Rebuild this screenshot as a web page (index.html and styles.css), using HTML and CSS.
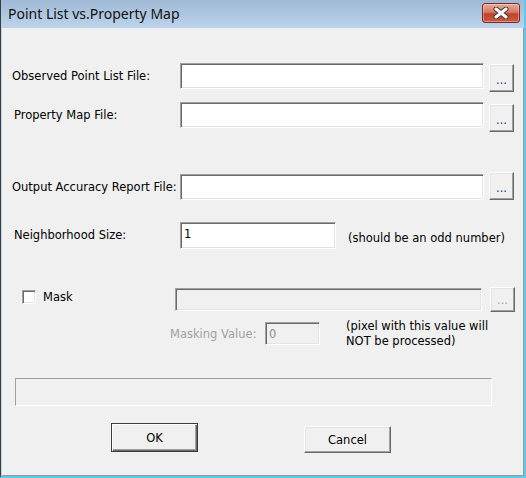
FILE: index.html
```html
<!DOCTYPE html>
<html lang="en">
<head>
  <meta charset="UTF-8">
  <title>Point List vs.Property Map</title>
  <link rel="stylesheet" href="styles.css">
</head>
<body>
  <div class="window">
    <div class="titlebar">
      <span class="title">Point List vs.Property Map</span>
      <button class="close-btn" title="Close">
        <svg width="16" height="12" viewBox="0 0 16 12">
          <path d="M3 2 L13 10 M13 2 L3 10" stroke="#3a3a3a" stroke-width="5" stroke-linecap="round"/>
          <path d="M3 2 L13 10 M13 2 L3 10" stroke="#ffffff" stroke-width="3" stroke-linecap="round"/>
        </svg>
      </button>
    </div>

    <div class="client">
      <div class="row row-observed">
        <label class="label">Observed Point List File:</label>
        <input type="text" class="field field-file">
        <button class="browse">...</button>
      </div>

      <div class="row row-property">
        <label class="label label-indent">Property Map File:</label>
        <input type="text" class="field field-file">
        <button class="browse browse-low">...</button>
      </div>

      <div class="row row-output">
        <label class="label">Output Accuracy Report File:</label>
        <input type="text" class="field field-file">
        <button class="browse browse-high">...</button>
      </div>

      <div class="row row-size">
        <label class="label label-indent">Neighborhood Size:</label>
        <input type="text" class="field field-size" value="1">
        <span class="hint">(should be an odd number)</span>
      </div>

      <div class="row row-mask">
        <label class="check">
          <span class="check-box"></span>
          <span class="check-text">Mask</span>
        </label>
        <input type="text" class="field field-mask" disabled>
        <button class="browse browse-disabled" disabled>...</button>
      </div>

      <div class="row row-value">
        <span class="label-disabled">Masking Value:</span>
        <input type="text" class="field field-value" value="0" disabled>
        <span class="hint hint-two">(pixel with this value will<br>NOT be processed)</span>
      </div>

      <div class="groove"></div>

      <div class="actions">
        <button class="push push-default">OK</button>
        <button class="push push-cancel">Cancel</button>
      </div>
    </div>
  </div>
</body>
</html>
```

FILE: styles.css
```css
body {
  margin: 0;
  padding: 0;
  background: #ffffff;
  font-family: "DejaVu Sans", "Liberation Sans", sans-serif;
  font-size: 11.5px;
  color: #000;
}

.window {
  width: 526px;
  height: 478px;
  box-sizing: border-box;
  border-left: 1px solid #3c3c3c;
  border-right: 2px solid #5ec8f0;
  border-bottom: 2px solid #5ec8f0;
  background: linear-gradient(to bottom, #9fb9d6 0px, #bcd3ea 28px, #bcd3ea 100%);
  display: flex;
  flex-direction: column;
}

/* caption */
.titlebar {
  height: 28px;
  display: flex;
  align-items: center;
  justify-content: space-between;
  padding: 0 4px 0 7px;
}

.title {
  font-family: "Noto Sans", "Open Sans", sans-serif;
  font-size: 14px;
  color: #101010;
  padding-bottom: 2px;
}

.close-btn {
  width: 38px;
  height: 20px;
  margin-bottom: 3px;
  border: 1px solid #7b2b22;
  border-radius: 3px;
  background: linear-gradient(to bottom, #e9a89a 0%, #d77a66 45%, #c0432e 55%, #cd5a3f 100%);
  box-shadow: inset 0 0 0 1px rgba(255,255,255,0.35);
  display: flex;
  align-items: center;
  justify-content: center;
  padding: 0;
}

/* dialog body */
.client {
  flex: 1;
  margin: 0 0 0 1px;
  background: #f0f0f0;
  border-right: 1px solid #9a9a9a;
  border-bottom: 1px solid #9a9a9a;
  padding-left: 10px;
}

.row {
  display: flex;
  align-items: flex-start;
  height: 26px;
}

.row-observed { margin-top: 35px; }
.row-property { margin-top: 13px; }
.row-output   { margin-top: 46px; }
.row-size     { margin-top: 22px; height: 27px; }
.row-mask     { margin-top: 39px; height: 24px; }
.row-value    { margin-top: 10px; height: 24px; }

.label {
  width: 168px;
  line-height: 26px;
  white-space: nowrap;
}

.label-indent {
  width: 166px;
  padding-left: 2px;
}

/* sunken edit box */
.field {
  box-sizing: border-box;
  height: 26px;
  margin: 0;
  padding: 2px 3px;
  border-top: 1px solid #a0a0a0;
  border-left: 1px solid #a0a0a0;
  border-right: 1px solid #ffffff;
  border-bottom: 1px solid #ffffff;
  box-shadow: inset 1px 1px 0 #696969, inset -1px -1px 0 #e3e3e3;
  background: #ffffff;
  font: inherit;
  color: #000;
  outline: none;
}

.field-file { width: 304px; }
.field-size { width: 156px; height: 27px; padding-bottom: 5px; }

.field-mask {
  width: 307px;
  height: 23px;
  background: #f0f0f0;
}

.field-value {
  width: 55px;
  height: 23px;
  margin-left: 1px;
  background: #f0f0f0;
  color: #8d8d8d;
}

/* raised push buttons */
.browse,
.push {
  box-sizing: border-box;
  margin: 0;
  padding: 0;
  background: #f0f0f0;
  border-top: 1px solid #ffffff;
  border-left: 1px solid #ffffff;
  border-right: 1px solid #696969;
  border-bottom: 1px solid #696969;
  box-shadow: inset -1px -1px 0 #a0a0a0, inset 1px 1px 0 #e3e3e3;
  font: inherit;
  color: #000;
}

.browse {
  width: 25px;
  height: 28px;
  margin-left: 5px;
  margin-top: 1px;
  color: #0a3c7c;
  line-height: 20px;
  padding-top: 4px;
}

.browse-low { margin-top: 2px; }
.browse-high { margin-top: -2px; }

.browse-disabled {
  height: 25px;
  margin-left: 8px;
  margin-top: -1px;
  color: #a0a0a0;
  padding-top: 1px;
}

.hint {
  margin-left: 12px;
  padding-top: 9px;
  white-space: nowrap;
}

.hint-two {
  margin-left: 26px;
  padding-top: 0;
  margin-top: -3px;
  line-height: 15px;
}

.check {
  box-sizing: border-box;
  width: 163px;
  display: flex;
  align-items: center;
  height: 24px;
  padding-left: 10px;
  margin-top: -3px;
}

.check-box {
  box-sizing: border-box;
  width: 14px;
  height: 14px;
  background: #ffffff;
  border-top: 1px solid #a0a0a0;
  border-left: 1px solid #a0a0a0;
  border-right: 1px solid #ffffff;
  border-bottom: 1px solid #ffffff;
  box-shadow: inset 1px 1px 0 #696969, inset -1px -1px 0 #e3e3e3;
}

.check-text {
  margin-left: 7px;
}

.label-disabled {
  margin-left: 158px;
  line-height: 24px;
  color: #a0a0a0;
  white-space: nowrap;
  width: 94px;
}

/* etched status strip */
.groove {
  margin-top: 32px;
  margin-left: 3px;
  width: 477px;
  height: 28px;
  box-sizing: border-box;
  border-top: 1px solid #a0a0a0;
  border-left: 1px solid #a0a0a0;
  border-right: 1px solid #ffffff;
  border-bottom: 1px solid #ffffff;
}

.actions {
  display: flex;
  align-items: flex-start;
  margin-top: 17px;
}

.push {
  width: 87px;
  height: 27px;
}

.push-default {
  height: 29px;
  margin-left: 99px;
  border: 1px solid #3c3c3c;
  box-shadow: inset 1px 1px 0 #ffffff, inset -1px -1px 0 #696969, inset -2px -2px 0 #a0a0a0;
}

.push-cancel {
  margin-left: 106px;
  margin-top: 3px;
}
```
